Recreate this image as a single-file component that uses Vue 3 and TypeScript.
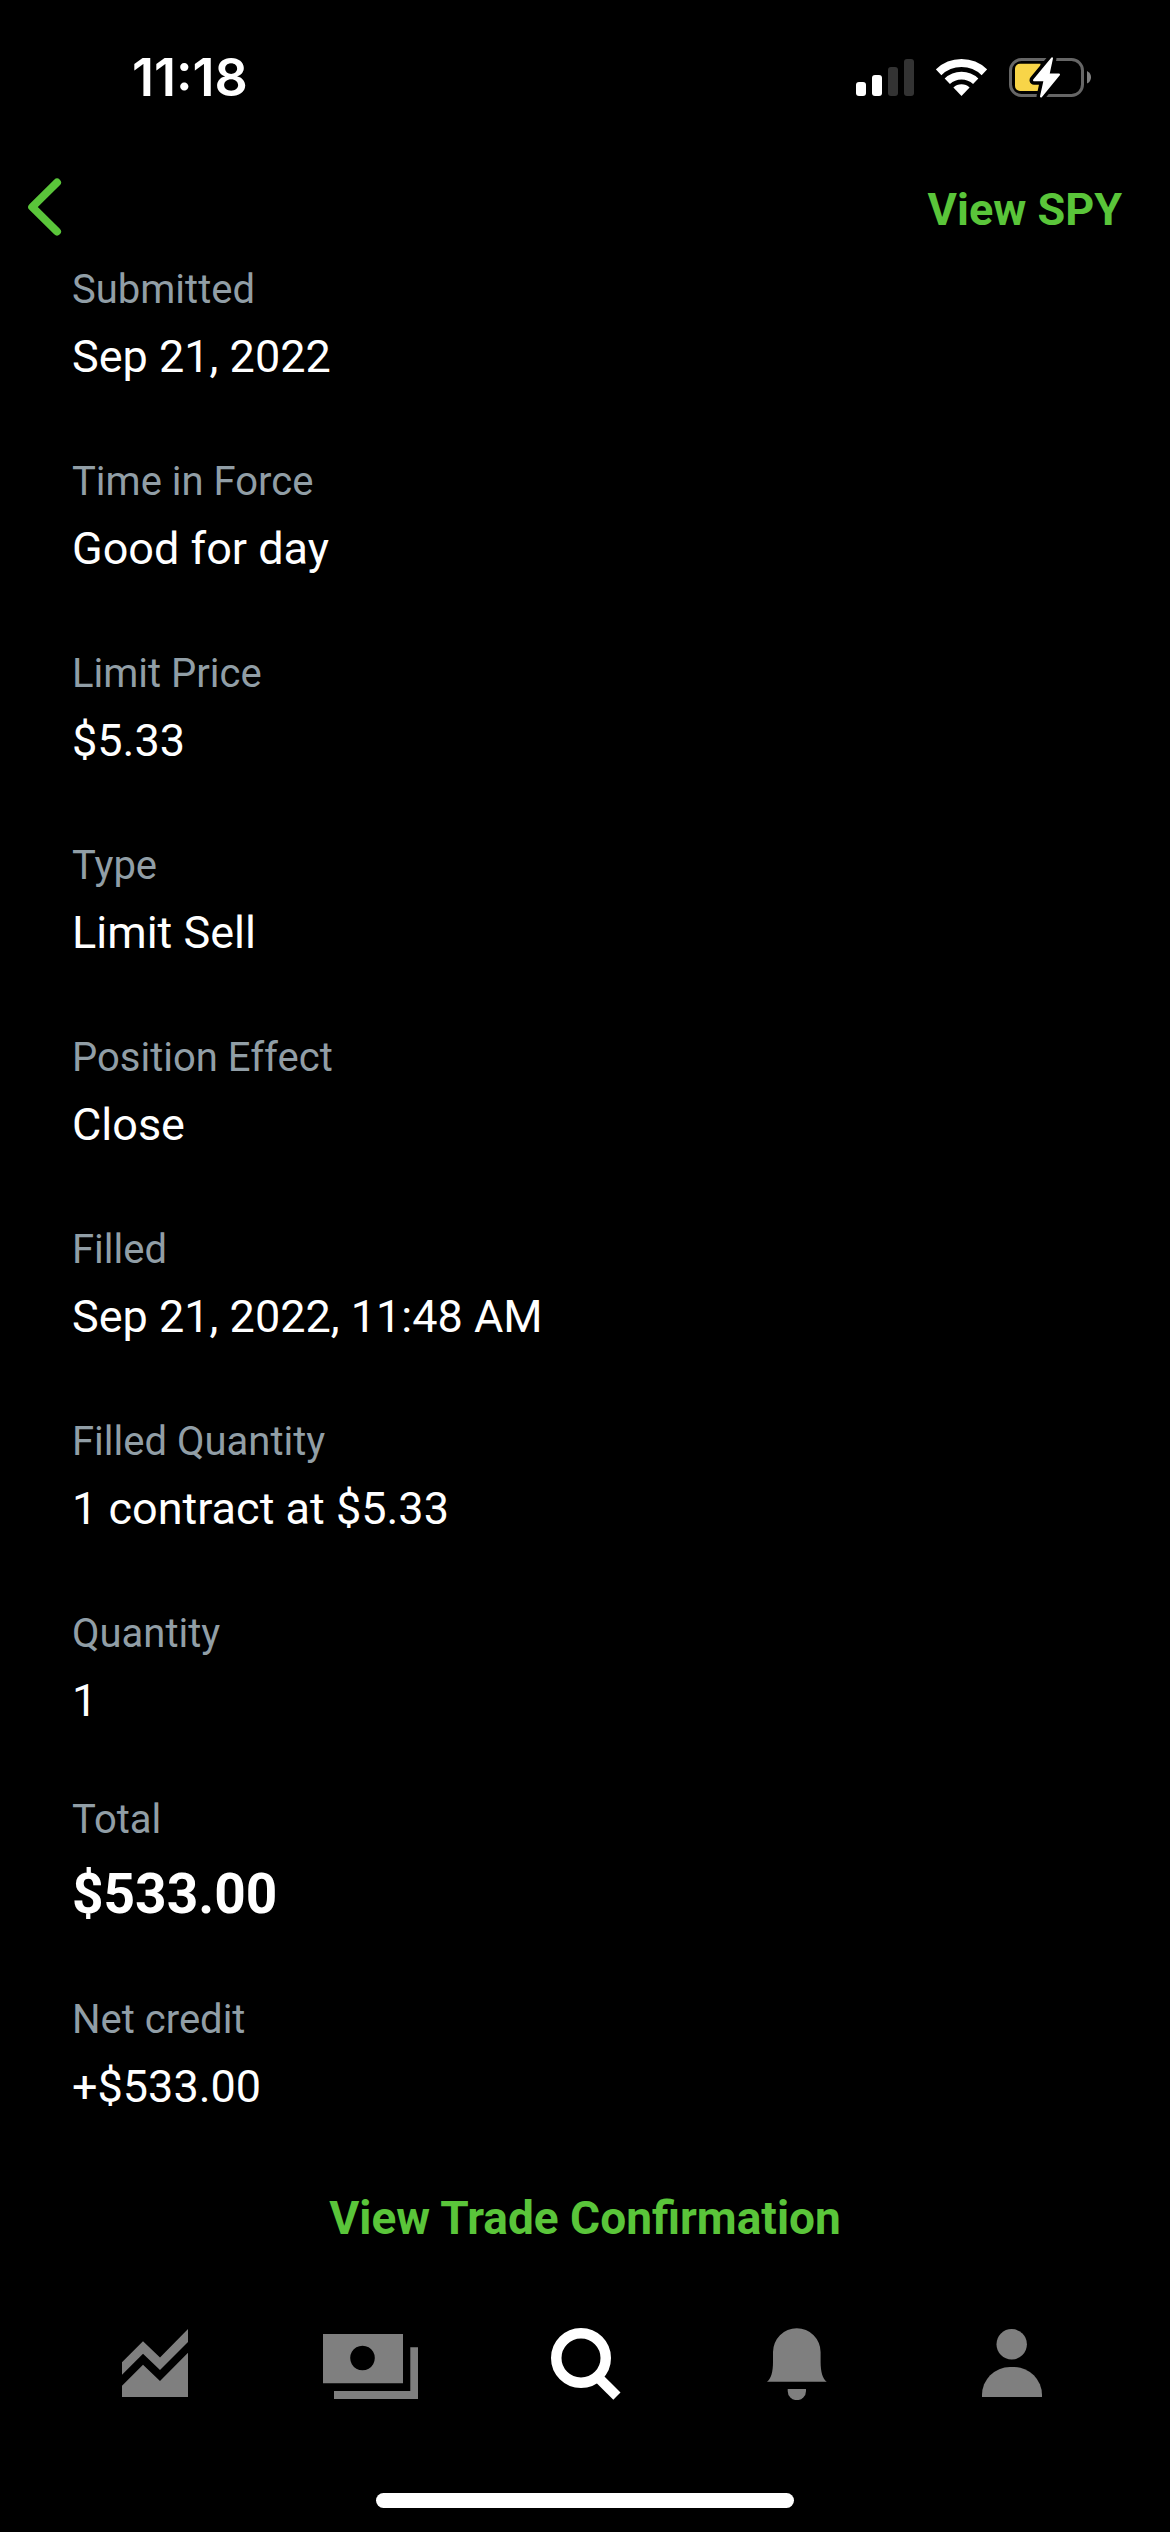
<script setup lang="ts">
interface Detail {
  label: string
  value: string
  strong?: boolean
}

const details: Detail[] = [
  { label: 'Submitted', value: 'Sep 21, 2022' },
  { label: 'Time in Force', value: 'Good for day' },
  { label: 'Limit Price', value: '$5.33' },
  { label: 'Type', value: 'Limit Sell' },
  { label: 'Position Effect', value: 'Close' },
  { label: 'Filled', value: 'Sep 21, 2022, 11:48 AM' },
  { label: 'Filled Quantity', value: '1 contract at $5.33' },
  { label: 'Quantity', value: '1' },
  { label: 'Total', value: '$533.00', strong: true },
  { label: 'Net credit', value: '+$533.00' },
]
</script>

<template>
  <div class="screen">
    <div class="status">
      <time class="clock">11:18</time>
      <div class="indicators">
        <svg width="58" height="40" viewBox="0 0 58 40" aria-hidden="true">
          <rect x="0" y="24" width="10" height="14" rx="3" fill="#fff" />
          <rect x="16" y="17" width="10" height="21" rx="3" fill="#fff" />
          <rect x="32" y="9" width="10" height="29" rx="3" fill="#333" />
          <rect x="48" y="1" width="10" height="37" rx="3" fill="#333" />
        </svg>
        <svg width="51" height="40" viewBox="0 0 51 40" aria-hidden="true">
          <g fill="none" stroke="#fff">
            <path d="M2.6 14.3A33 33 0 0 1 48.4 14.3" stroke-width="8" />
            <path d="M11.3 23.3A20.5 20.5 0 0 1 39.7 23.3" stroke-width="7.6" />
          </g>
          <path d="M17.4 29.6A11.7 11.7 0 0 1 33.6 29.6L25.5 38Z" fill="#fff" />
        </svg>
        <svg class="battery" width="82" height="40" viewBox="0 0 82 40" aria-hidden="true">
          <rect x="1.5" y="1.5" width="72" height="36" rx="11" fill="none" stroke="#666" stroke-width="3" />
          <path d="M78 13q4 2 4 6.300t-4 6.300z" fill="#808080" />
          <path d="M11 5.700H31.500V33H11a5 5 0 0 1-5-5V10.700a5 5 0 0 1 5-5z" fill="#f8d548" />
          <path
            class="bolt"
            d="M43 0.300L25 22.200H35.600L32 38.500L50 16.500H39.500Z"
            fill="#fff"
          />
          <path
            d="M43 0.300L25 22.200H35.600L32 38.500L50 16.500H39.500Z"
            fill="#fff"
            stroke="#fff"
            stroke-width="2"
            stroke-linejoin="round"
          />
        </svg>
      </div>
    </div>

    <header class="bar">
      <button class="back" type="button" aria-label="Back">
        <svg width="40" height="60" viewBox="0 0 40 60" aria-hidden="true">
          <path
            d="M33 5.500L8.200 30L33 54.500"
            fill="none"
            stroke="#5ac53a"
            stroke-width="8"
            stroke-linecap="round"
            stroke-linejoin="round"
          />
        </svg>
      </button>
      <a class="action symbol" href="#">View SPY</a>
    </header>

    <main>
      <dl class="details">
        <div v-for="item in details" :key="item.label" class="row" :class="{ strong: item.strong }">
          <dt>{{ item.label }}</dt>
          <dd>{{ item.value }}</dd>
        </div>
      </dl>
      <a class="action confirmation" href="#">View Trade Confirmation</a>
    </main>

    <nav class="tabs" aria-label="Main">
      <button class="tab" type="button" aria-label="Investing">
        <svg width="96" height="72" viewBox="0 0 96 72" aria-hidden="true">
          <path d="M13 34.300L34 13.300L51 29.500L79 1V14L51 42L34 25.700L13 46.700Z" />
          <path d="M13 57.700L34 36.700L51 53L79 24.700V69H13Z" />
        </svg>
      </button>
      <button class="tab" type="button" aria-label="Cash">
        <svg width="96" height="72" viewBox="0 0 96 72" aria-hidden="true">
          <path fill-rule="evenodd" d="M0 6H80V55.300H0ZM39.500 17.700a12.300 12.300 0 1 0 .01 0Z" />
          <path d="M87.300 19.300H95V71H11V63H87.300Z" />
        </svg>
      </button>
      <button class="tab active" type="button" aria-label="Search" aria-current="page">
        <svg width="96" height="72" viewBox="0 0 96 72" aria-hidden="true">
          <circle cx="44" cy="30" r="24.750" fill="none" stroke="#fff" stroke-width="10.500" />
          <path d="M58 53.400L76.300 71.700L83.500 64.500L65.200 46.200Z" />
        </svg>
      </button>
      <button class="tab" type="button" aria-label="Notifications">
        <svg width="96" height="72" viewBox="0 0 96 72" aria-hidden="true">
          <path d="M22 24a23.800 23.800 0 0 1 47.600 0V34C69.600 44 71.600 50.500 75.700 53.800H16C20.100 50.500 22 44 22 34Z" />
          <path d="M36.700 61H55V63a9.150 9.150 0 0 1-18.300 0Z" />
        </svg>
      </button>
      <button class="tab" type="button" aria-label="Account">
        <svg width="96" height="72" viewBox="0 0 96 72" aria-hidden="true">
          <circle cx="46.700" cy="16.300" r="15.200" />
          <path d="M17 69V67A28 28 0 0 1 45 39H49A28 28 0 0 1 77 67V69Z" />
        </svg>
      </button>
    </nav>
    <div class="home"></div>
  </div>
</template>

<style>
body {
  background: #000;
}
</style>

<style scoped>
.screen {
  display: flex;
  flex-direction: column;
  box-sizing: border-box;
  min-height: 100vh;
  padding-bottom: 24px;
  background: #000;
  color: #fff;
  font-family: Roboto, "Liberation Sans", sans-serif;
}

svg {
  display: block;
}

button {
  padding: 0;
  border: 0;
  background: none;
}

.status {
  display: flex;
  align-items: center;
  justify-content: space-between;
  box-sizing: border-box;
  height: 148px;
  padding: 8px 79px 0 132px;
}

.clock {
  font: 600 52px/60px Inter, sans-serif;
}

.indicators {
  display: flex;
  gap: 22px;
}

.battery {
  overflow: visible;
}

.bolt {
  stroke: #000;
  stroke-width: 9px;
  stroke-linejoin: round;
}

.bar {
  display: flex;
  align-items: center;
  justify-content: space-between;
  height: 118px;
  padding: 0 48px 0 24px;
}

.action {
  color: #5ac53a;
  font-size: 45px;
  font-weight: 700;
  line-height: 60px;
  text-decoration: none;
}

.symbol {
  padding-top: 6px;
}

.confirmation {
  font-size: 46px;
}

main {
  display: flex;
  flex-direction: column;
  align-items: center;
  gap: 71px;
}

.details {
  display: flex;
  flex-direction: column;
  gap: 71px;
  box-sizing: border-box;
  width: 100%;
  margin: 0;
  padding: 0 72px;
}

.row {
  display: flex;
  flex-direction: column;
  gap: 13px;
}

dt {
  color: #919ea6;
  font-size: 40px;
  line-height: 48px;
}

dd {
  margin: 0;
  font-size: 45px;
  line-height: 60px;
}

.strong {
  margin: -6px 0;
}

.strong dd {
  font-size: 55px;
  font-weight: 700;
  line-height: 74px;
}

.tabs {
  display: flex;
  margin-top: auto;
  padding: 48px 50px 93px;
}

.tab {
  display: flex;
  flex: 1;
  justify-content: center;
}

.tab svg {
  fill: #7f7f7f;
}

.tab.active svg {
  fill: #fff;
}

.home {
  align-self: center;
  width: 418px;
  height: 15px;
  border-radius: 8px;
  background: #fff;
}
</style>
